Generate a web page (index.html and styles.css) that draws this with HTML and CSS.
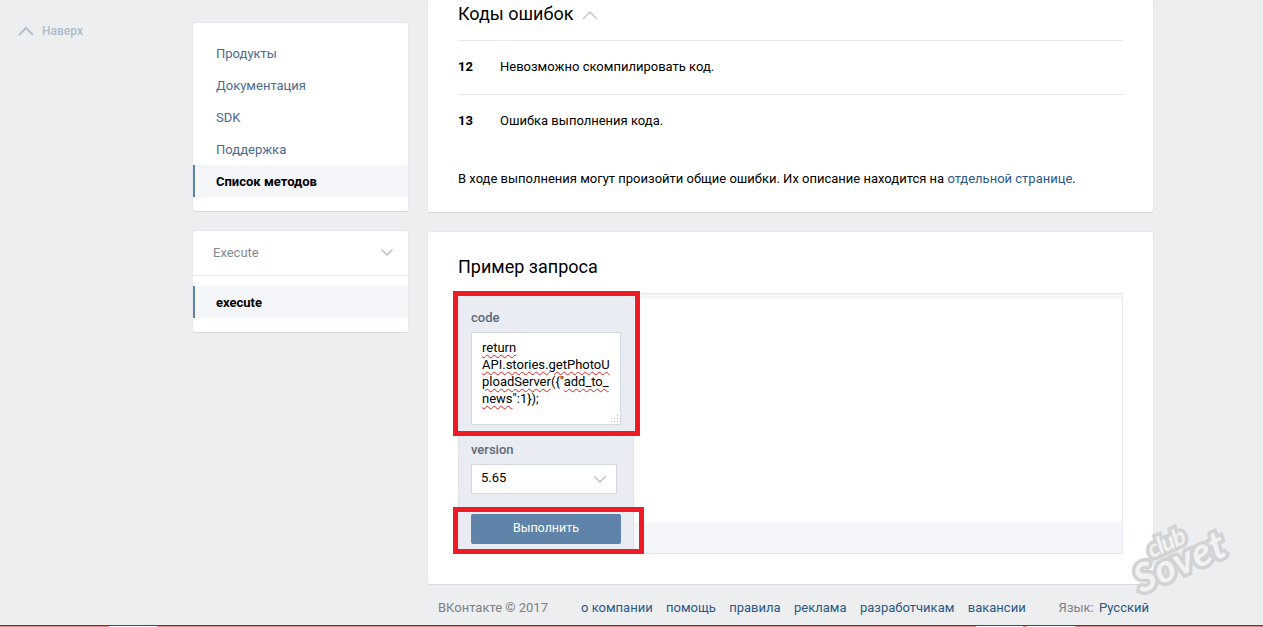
FILE: index.html
```html
<!DOCTYPE html>
<html lang="ru">
<head>
    <meta charset="UTF-8">
    <title>execute - Разработчикам</title>
    <link rel="stylesheet" href="styles.css">
</head>
<body>
    <div class="page">
        <a class="to-top" href="#">
            <svg class="to-top-icon" width="16" height="10" viewBox="0 0 16 10"><path d="M1 9l7-7 7 7"/></svg>
            Наверх
        </a>

        <div class="sidebar">
            <div class="card side-menu">
                <a class="side-item" href="#">Продукты</a>
                <a class="side-item" href="#">Документация</a>
                <a class="side-item" href="#">SDK</a>
                <a class="side-item" href="#">Поддержка</a>
                <a class="side-item active" href="#">Список методов</a>
            </div>
            <div class="card side-section">
                <div class="section-head">
                    <span>Execute</span>
                    <svg class="chevron" width="12" height="7" viewBox="0 0 12 7"><path d="M.5.5L6 6l5.500-5.500"/></svg>
                </div>
                <div class="section-list">
                    <a class="side-item active" href="#">execute</a>
                </div>
            </div>
        </div>

        <div class="content">
            <div class="card errors">
                <h2 class="title">Коды ошибок
                    <svg class="title-icon" width="16" height="9" viewBox="0 0 16 9"><path d="M1 8l7-7 7 7"/></svg>
                </h2>
                <div class="error-row"><b>12</b><span>Невозможно скомпилировать код.</span></div>
                <div class="error-row"><b>13</b><span>Ошибка выполнения кода.</span></div>
                <p class="note">В ходе выполнения могут произойти общие ошибки. Их описание находится на <a href="#">отдельной странице</a>.</p>
            </div>

            <div class="card example">
                <h2 class="title">Пример запроса</h2>
                <div class="request">
                    <form class="request-form">
                        <label class="field-label">code</label>
                        <div class="code-box">
                            <span class="err">return</span><br>
                            <span class="err">API.stories.getPhotoU</span><br>
                            <span class="err">ploadServer</span>({"<span class="err">add_to_</span><br>
                            <span class="err">news</span>":1});
                            <svg class="grip" width="9" height="9" viewBox="0 0 9 9"><path d="M7 1h1v1H7zM4 4h1v1H4zM7 4h1v1H7zM1 7h1v1H1zM4 7h1v1H4zM7 7h1v1H7z"/></svg>
                        </div>
                        <label class="field-label">version</label>
                        <div class="select-box">
                            <span class="select-value">5.65</span>
                            <svg class="chevron" width="12" height="7" viewBox="0 0 12 7"><path d="M.5.5L6 6l5.500-5.500"/></svg>
                        </div>
                        <button class="run-btn" type="button">Выполнить</button>
                        <div class="mark mark-code"></div>
                        <div class="mark mark-btn"></div>
                    </form>
                    <div class="response">
                        <div class="response-body"></div>
                    </div>
                </div>
            </div>

            <div class="footer">
                <span class="copy">ВКонтакте © 2017</span>
                <div class="footer-links">
                    <a href="#">о компании</a>
                    <a href="#">помощь</a>
                    <a href="#">правила</a>
                    <a href="#">реклама</a>
                    <a href="#">разработчикам</a>
                    <a href="#">вакансии</a>
                </div>
                <span class="lang">Язык: <a href="#">Русский</a></span>
            </div>
        </div>
    </div>

    <div class="watermark"><span class="wm-club">club</span><span class="wm-sovet">Sovet</span></div>
    <div class="bottom-line"></div>
</body>
</html>
```

FILE: styles.css
```css
html, body {
    height: 627px;
    overflow: hidden;
}
body {
    margin: 0;
    background: #edeef0;
    font-family: Roboto, "Liberation Sans", sans-serif;
    font-size: 13px;
    color: #000;
}
a {
    color: #2a5885;
    text-decoration: none;
}
.page {
    display: flex;
    align-items: flex-start;
}
.card {
    background: #fff;
    border-radius: 2px;
    box-shadow: 0 1px 0 0 #d7d8db, 0 0 0 1px #e7e8ec;
}

/* left link */
.to-top {
    width: 193px;
    padding: 25px 0 0 18px;
    box-sizing: border-box;
    display: flex;
    align-items: center;
    gap: 8px;
    font-size: 12px;
    font-weight: 500;
    line-height: 12px;
    color: #aebccd;
}
.to-top-icon path {
    fill: none;
    stroke: #b4c0cf;
    stroke-width: 2;
}

/* sidebar */
.sidebar {
    width: 215px;
    padding-top: 23px;
    flex-shrink: 0;
}
.side-menu {
    padding: 14px 0;
    margin-bottom: 20px;
}
.side-item {
    display: block;
    height: 32px;
    line-height: 34px;
    padding-left: 23px;
    color: #4a6b8e;
}
.side-item.active {
    padding-left: 21px;
    border-left: 2px solid #5d81a8;
    background: #f5f6f9;
    color: #000;
    font-weight: 700;
}
.section-head {
    height: 43px;
    padding: 0 15px 1px 20px;
    display: flex;
    align-items: center;
    justify-content: space-between;
    border-bottom: 1px solid #e7e8ec;
    color: #828a94;
}
.section-list {
    padding: 10px 0 14px;
}
.chevron path {
    fill: none;
    stroke: #b7bcc4;
    stroke-width: 1.300;
}

/* content */
.content {
    width: 725px;
    margin-left: 20px;
    flex-shrink: 0;
}
.errors {
    height: 212px;
    padding: 0 30px;
    box-sizing: border-box;
    margin-bottom: 20px;
}
.title {
    margin: 0;
    font-size: 18px;
    font-weight: 400;
    line-height: 28px;
}
.errors .title {
    height: 40px;
}
.title-icon {
    margin-left: 4px;
}
.title-icon path {
    fill: none;
    stroke: #c5c9cf;
    stroke-width: 1.500;
}
.error-row {
    display: flex;
    height: 51px;
    padding-bottom: 2px;
    align-items: center;
    border-top: 1px solid #e7e8ec;
}
.error-row b {
    width: 42px;
    font-size: 13px;
}
.note {
    margin: 22px 0 0;
    line-height: 18px;
}

.example {
    height: 352px;
    padding: 21px 30px 0;
    box-sizing: border-box;
}
.example .title {
    margin-bottom: 12px;
}
.request {
    display: flex;
    height: 259px;
    border: 1px solid #e7e8ec;
    border-left: none;
}
.request-form {
    position: relative;
    width: 176px;
    padding: 16px 12px 0;
    box-sizing: border-box;
    background: #e9ecf2;
    border-left: 1px solid #dfe2e8;
    border-right: 1px solid #dfe2e8;
}
.field-label {
    display: block;
    font-weight: 500;
    color: #606a76;
    line-height: 16px;
    margin-bottom: 6px;
}
.code-box {
    position: relative;
    width: 150px;
    height: 93px;
    padding: 6px 10px 0;
    box-sizing: border-box;
    margin-bottom: 17px;
    background: #fff;
    border: 1px solid #d3d9de;
    line-height: 17px;
    white-space: nowrap;
    overflow: hidden;
}
.err {
    text-decoration: underline wavy #e02020 1px;
    text-underline-offset: 2px;
}
.grip {
    position: absolute;
    right: 1px;
    bottom: 1px;
    fill: #b5bac2;
}
.select-box {
    width: 146px;
    height: 30px;
    padding: 0 10px 0 9px;
    box-sizing: border-box;
    margin-bottom: 20px;
    display: flex;
    align-items: center;
    justify-content: space-between;
    background: #fff;
    border: 1px solid #d3d9de;
}
.select-value {
    margin-bottom: 3px;
}
.run-btn {
    display: block;
    width: 150px;
    height: 30px;
    padding: 0 0 4px;
    border: none;
    border-radius: 2px;
    background: #5f83a9;
    color: #fff;
    font-family: inherit;
    font-size: 12.500px;
}
.response {
    flex: 1;
    background: #f5f6f9;
}
.response-body {
    height: 223px;
    margin-top: 5px;
    background: #fff;
}

/* red highlights drawn on top of the form */
.mark {
    position: absolute;
    border: 5px solid #ed1c24;
    box-sizing: border-box;
}
.mark-code {
    left: -6px;
    top: -3px;
    width: 187px;
    height: 145px;
}
.mark-btn {
    left: -6px;
    top: 213px;
    width: 191px;
    height: 47px;
}

/* footer */
.footer {
    display: flex;
    align-items: center;
    height: 18px;
    margin-top: 14px;
    padding: 0 4px 0 10px;
    color: #7b8086;
}
.copy {
    width: 143px;
}
.footer-links {
    display: flex;
    gap: 13.400px;
    flex: 1;
}
.lang a {
    margin-left: 2px;
}

.watermark {
    position: absolute;
    left: 1131px;
    top: 520px;
    width: 100px;
    height: 70px;
    transform: rotate(-24deg);
    font-family: Lato, "Open Sans", sans-serif;
    font-style: italic;
    font-weight: 700;
    color: #f1f2f3;
    -webkit-text-stroke: 7px #d2d3d5;
    paint-order: stroke fill;
}
.wm-club {
    position: absolute;
    left: 22px;
    top: 2px;
    font-size: 24px;
    letter-spacing: -1px;
}
.wm-sovet {
    position: absolute;
    left: -2px;
    top: 16px;
    font-size: 39px;
    letter-spacing: 1px;
}
.bottom-line {
    position: absolute;
    left: 0;
    top: 625px;
    width: 1263px;
    height: 2px;
    box-sizing: border-box;
    border-top: 1px solid #7c2f2f;
    background: linear-gradient(to right, #e2898c 109px, #fff 109px 157px, #e2898c 157px 976px, #fff 976px 1023px, #e2898c 1023px 1027px, #fff 1027px 1075px, #e2898c 1075px);
}
```
